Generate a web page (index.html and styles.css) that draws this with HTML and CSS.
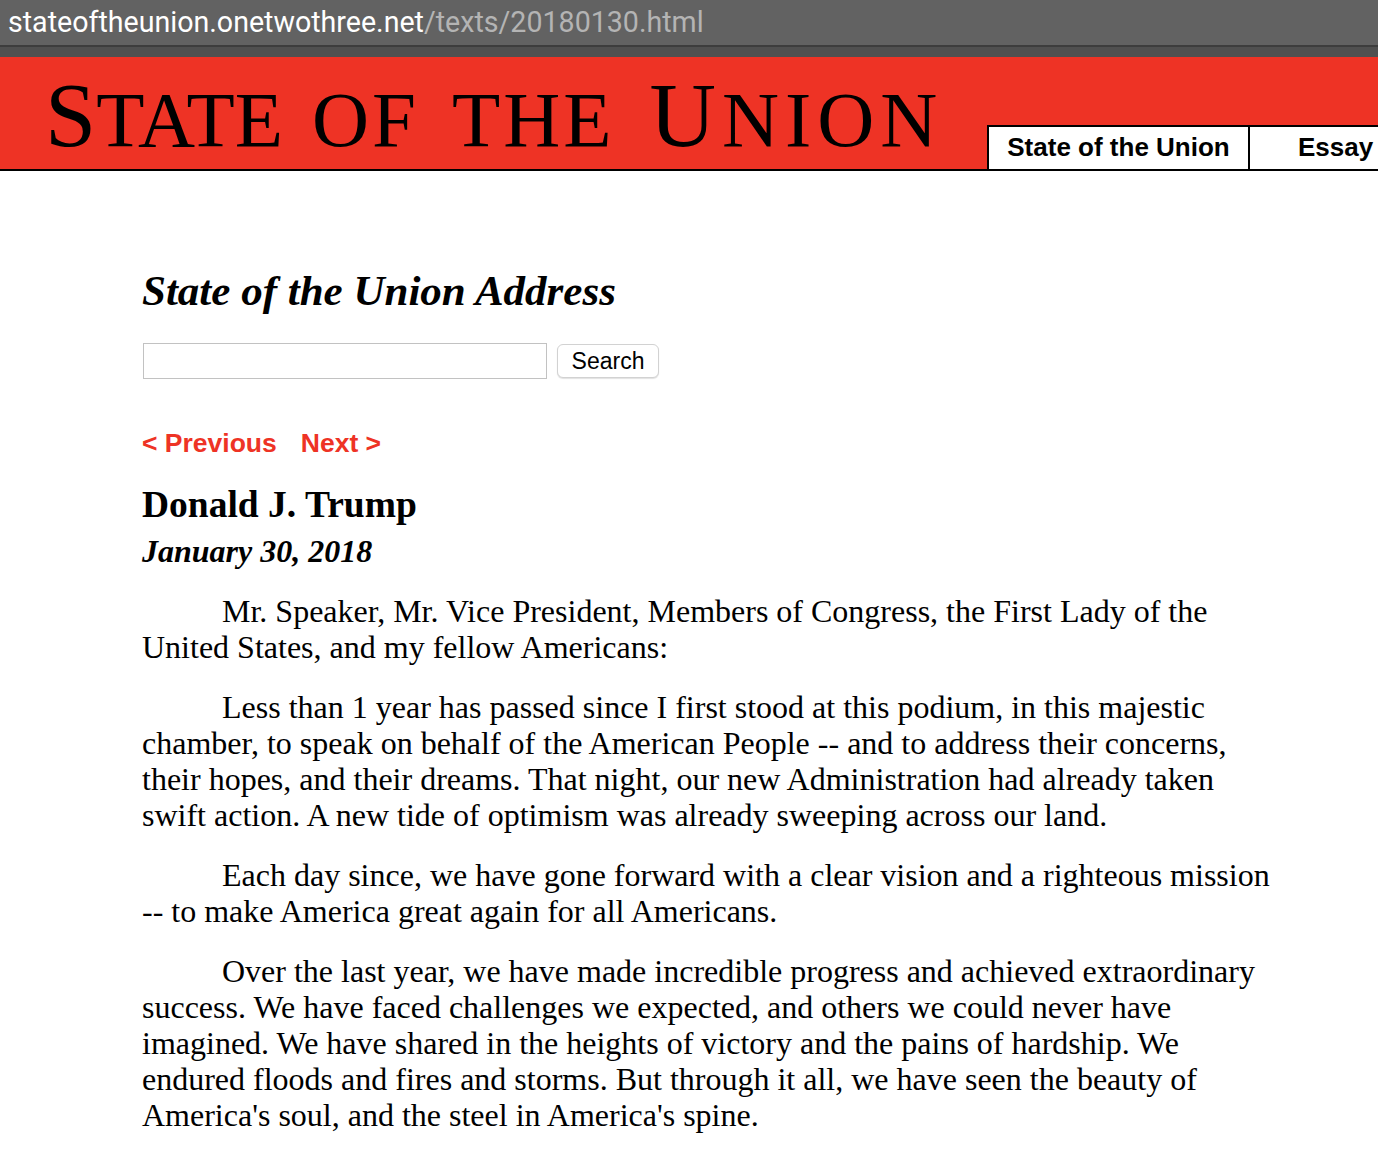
FILE: index.html
```html
<!DOCTYPE html>
<html lang="en">
<head>
<meta charset="utf-8">
<title>State of the Union Address</title>
<link rel="stylesheet" href="styles.css">
</head>
<body>
<div class="urlbar">
  <div class="url"><span class="host">stateoftheunion.onetwothree.net</span><span class="path">/texts/20180130.html</span></div>
</div>
<div class="urlgap"></div>
<header class="banner">
  <div class="logo">
    <span class="word w-state"><span class="cap">S</span><span class="sc">tate</span></span>
    <span class="word w-of"><span class="sc">of</span></span>
    <span class="word w-the"><span class="sc">the</span></span>
    <span class="word w-union"><span class="cap">U</span><span class="sc">nion</span></span>
  </div>
  <nav class="tabs">
    <a class="tab tab-sotu" href="#">State of the Union</a>
    <a class="tab tab-essay" href="#">Essay</a>
  </nav>
</header>
<main class="content">
  <h1 class="page-title">State of the Union Address</h1>
  <form class="search">
    <input class="search-input" type="text">
    <button class="search-btn" type="button">Search</button>
  </form>
  <div class="pager">
    <a href="#" class="pager-link">&lt; Previous</a>
    <a href="#" class="pager-link">Next &gt;</a>
  </div>
  <h2 class="speaker">Donald J. Trump</h2>
  <h3 class="date">January 30, 2018</h3>
  <div class="speech">
    <p>Mr. Speaker, Mr. Vice President, Members of Congress, the First Lady of the United States, and my fellow Americans:</p>
    <p>Less than 1 year has passed since I first stood at this podium, in this majestic chamber, to speak on behalf of the American People -- and to address their concerns, their hopes, and their dreams. That night, our new Administration had already taken swift action. A new tide of optimism was already sweeping across our land.</p>
    <p>Each day since, we have gone forward with a clear vision and a righteous mission -- to make America great again for all Americans.</p>
    <p>Over the last year, we have made incredible progress and achieved extraordinary success. We have faced challenges we expected, and others we could never have imagined. We have shared in the heights of victory and the pains of hardship. We endured floods and fires and storms. But through it all, we have seen the beauty of America's soul, and the steel in America's spine.</p>
  </div>
</main>
</body>
</html>
```

FILE: styles.css
```css
html, body {
  margin: 0;
  padding: 0;
  background: #ffffff;
}
body {
  font-family: "Liberation Serif", "Times New Roman", serif;
  color: #000;
  overflow: hidden;
}
.urlbar {
  height: 45px;
  background: #626262;
  border-bottom: 2px solid #3d3d3d;
  display: flex;
  align-items: center;
  padding-left: 8px;
}
.url {
  font-family: Roboto, "Liberation Sans", sans-serif;
  font-size: 28.6px;
  white-space: nowrap;
  line-height: 1;
  margin-top: -1px;
}
.host { color: #ffffff; }
.path { color: #b4b4b4; }
.urlgap {
  height: 10px;
  background: #505050;
}
.banner {
  height: 112px;
  background: #ee3325;
  border-bottom: 2px solid #000;
  display: flex;
  justify-content: space-between;
  align-items: flex-end;
  overflow: hidden;
}
.logo {
  font-family: "Liberation Serif", serif;
  line-height: 1;
  padding-left: 45px;
  align-self: flex-start;
  margin-top: 12px;
  white-space: nowrap;
  display: flex;
  align-items: baseline;
  gap: 33px;
}
.logo .word {
  display: inline-block;
}
.logo .cap {
  font-size: 92px;
}
.logo .sc {
  font-size: 79px;
  text-transform: uppercase;
}
.logo .w-state { letter-spacing: 0px; margin-right: -4px; }
.logo .w-of { letter-spacing: 3px; }
.logo .w-the { letter-spacing: 3px; }
.logo .w-union { letter-spacing: 6px; margin-left: 2px; }
.tabs {
  display: flex;
  flex-shrink: 0;
  width: 391px;
}
.tab {
  display: block;
  box-sizing: border-box;
  height: 44px;
  background: #fff;
  border: 2px solid #000;
  border-bottom: none;
  font-family: "Liberation Sans", Arial, sans-serif;
  font-weight: bold;
  font-size: 26px;
  color: #000;
  text-decoration: none;
  line-height: 40px;
  white-space: nowrap;
}
.tab-sotu {
  width: 263px;
  text-align: center;
}
.tab-essay {
  border-left: none;
  padding-left: 48px;
  flex: 1;
  border-right: none;
}
.content {
  padding: 96px 0 0 142px;
  width: 1136px;
}
.page-title {
  font-family: "Liberation Serif", serif;
  font-style: italic;
  font-weight: bold;
  font-size: 43px;
  line-height: 48px;
  margin: 0;
}
.search {
  margin-top: 28px;
  display: flex;
  align-items: center;
  gap: 10px;
}
.search-input {
  box-sizing: border-box;
  width: 404px;
  height: 36px;
  border: 1px solid #c2c2c2;
  margin: 0 0 0 1px;
  padding: 0;
  background: #fff;
}
.search-btn {
  box-sizing: border-box;
  width: 102px;
  height: 34px;
  background: #fff;
  border: 1px solid #d2d2d2;
  border-radius: 6px;
  box-shadow: 0 1px 1px rgba(0,0,0,0.12);
  font-family: "Liberation Sans", Arial, sans-serif;
  font-size: 23px;
  color: #000;
  padding: 0;
}
.pager {
  margin-top: 49px;
  display: flex;
  gap: 24px;
}
.pager-link {
  font-family: "Liberation Sans", Arial, sans-serif;
  font-weight: bold;
  font-size: 26.5px;
  line-height: 30px;
  color: #ee3325;
  text-decoration: none;
}
.speaker {
  font-family: "Liberation Serif", serif;
  font-weight: bold;
  font-size: 37.5px;
  line-height: 42px;
  margin: 26px 0 0 0;
}
.date {
  font-family: "Liberation Serif", serif;
  font-weight: bold;
  font-style: italic;
  font-size: 32px;
  line-height: 36px;
  margin: 7px 0 0 0;
}
.speech p {
  font-size: 32px;
  line-height: 36px;
  text-indent: 80px;
  margin: 24px 0 0 0;
}
```
